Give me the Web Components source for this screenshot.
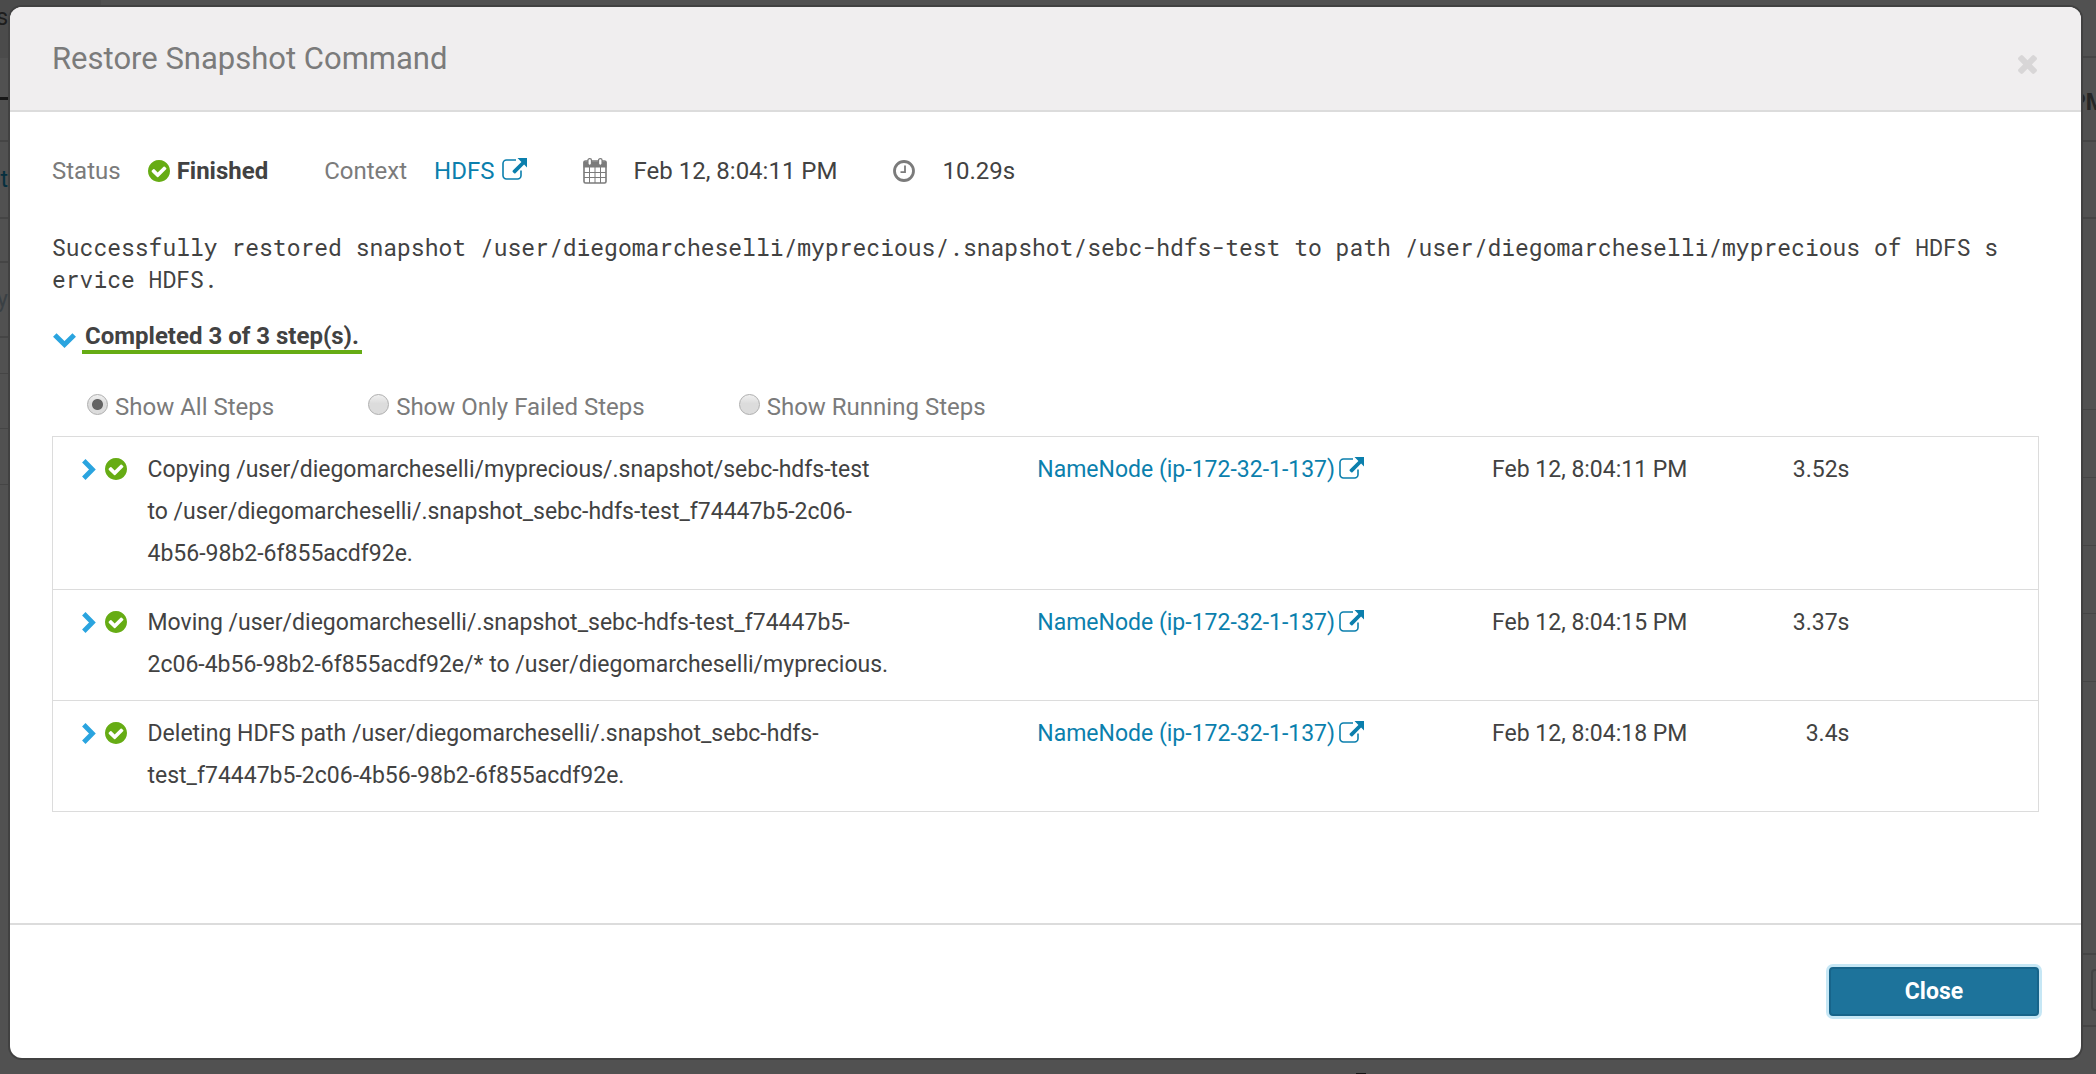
<!DOCTYPE html>
<html lang="en">
<head>
<meta charset="utf-8">
<title>Restore Snapshot Command</title>
<style>
html, body { height: 100%; margin: 0; }
body { font-family: Roboto, "Liberation Sans", sans-serif; color: #424242; background: #515151; }
</style>
</head>
<body>
<app-shell>
  <page-edge slot="left" side="left"></page-edge>
  <page-edge slot="right" side="right"></page-edge>
  <command-dialog heading="Restore Snapshot Command">
    <command-summary></command-summary>
    <command-message>Successfully restored snapshot /user/diegomarcheselli/myprecious/.snapshot/sebc-hdfs-test to path /user/diegomarcheselli/myprecious of HDFS service HDFS.</command-message>
    <steps-heading>Completed 3 of 3 step(s).</steps-heading>
    <step-filter></step-filter>
    <step-table></step-table>
  </command-dialog>
</app-shell>
<script>
class Base extends HTMLElement {
  connectedCallback() {
    if (this.shadowRoot) return;
    this.attachShadow({ mode: 'open' }).innerHTML = this.view();
  }
}

const ICONS = {
  check: ['128 128 1536 1536', 22, 22, '<path fill="currentColor" d="M1412 734q0-28-18-46l-91-90q-19-19-45-19t-45 19l-408 407-226-226q-19-19-45-19t-45 19l-91 90q-18 18-18 46 0 27 18 45l362 362q19 19 45 19 27 0 46-19l543-543q18-18 18-45zm252 162q0 209-103 385.5t-279.5 279.5-385.5 103-385.5-103-279.5-279.5-103-385.5 103-385.5 279.5-279.5 385.5-103 385.5 103 279.5 279.5 103 385.5z"/>'],
  times: ['302 366 1188 1188', 19, 19, '<path fill="currentColor" d="M1490 1322q0 40-28 68l-136 136q-28 28-68 28t-68-28l-294-294-294 294q-28 28-68 28t-68-28l-136-136q-28-28-28-68t28-68l294-294-294-294q-28-28-28-68t28-68l136-136q28-28 68-28t68 28l294 294 294-294q28-28 68-28t68 28l136 136q28 28 28 68t-28 68l-294 294 294 294q28 28 28 68z"/>'],
  external: ['0 0 25 22', 25, 22, '<path fill="none" stroke="currentColor" stroke-width="1.6" d="M14 2H4.5A3.5 3.5 0 0 0 1 5.500v12A3.500 3.500 0 0 0 4.500 21h11a3.500 3.500 0 0 0 3.500-3.500V12.500"/><path fill="currentColor" d="M15.500 0H25v9.500l-2.900-2.900-8.600 8.600a1 1 0 0 1-1.400 0l-1.300-1.300a1 1 0 0 1 0-1.400l8.600-8.600z"/>'],
  calendar: ['0 0 24 26', 24, 26, '<rect x="1" y="3" width="22" height="22" rx="1.500" fill="none" stroke="currentColor" stroke-width="1.600"/><path fill="currentColor" d="M.500 3.500h23v6H.500z"/><path fill="none" stroke="currentColor" stroke-width="1" d="M6.500 9v16M12 9v16M17.500 9v16M1 14.500h22M1 19.500h22"/><rect x="4.900" y=".700" width="3.600" height="6.600" rx="1.700" fill="#fff" stroke="currentColor" stroke-width="1.300"/><rect x="15.500" y=".700" width="3.600" height="6.600" rx="1.700" fill="#fff" stroke="currentColor" stroke-width="1.300"/>'],
  clock: ['0 0 22 22', 22, 22, '<circle cx="11" cy="11" r="9.500" fill="none" stroke="currentColor" stroke-width="2.800"/><path fill="none" stroke="currentColor" stroke-width="1.800" d="M12 5.500v6.600H7.500"/>'],
  down: ['0 0 23 15', 23, 15, '<path fill="none" stroke="currentColor" stroke-width="5" d="M1.800 2l9.700 9.500L21.200 2"/>'],
  right: ['0 0 14 21', 14, 21, '<path fill="none" stroke="currentColor" stroke-width="4.800" d="M1.800 1.800l8.600 8.700-8.600 8.700"/>']
};
customElements.define('ui-icon', class extends Base {
  view() {
    const [box, w, h, body] = ICONS[this.getAttribute('name')];
    return `<style>:host{display:inline-flex;flex:none}svg{display:block}</style>
      <svg width="${w}" height="${h}" viewBox="${box}" aria-hidden="true">${body}</svg>`;
  }
});

customElements.define('app-shell', class extends Base {
  view() {
    return `<style>
      :host { display: grid; grid-template-columns: 10px minmax(0, 1fr) 15px; min-height: 100vh;
        background: linear-gradient(#141414, #141414) 65% 100% / 10px 1px no-repeat,
          linear-gradient(#4b4b4b, #4b4b4b) 0 0 / 101px 58px no-repeat, #515151; }
      ::slotted(command-dialog) { margin: 7px 0 16px; }
    </style><slot name="left"></slot><slot></slot><slot name="right"></slot>`;
  }
});

/* The slivers of the dimmed page on either side of the dialog */
const EDGES = {
  left: [[58, 's', 'ink plain'], [42, '', 'tab'], [42, '', 'thick'], [77, 't', 'teal thick'], [44, '', 'thick'],
    [75, 'y', 'faint thick'], [36, '', ''], [55, '', ''], [56, '', '']],
  right: [[58, '', 'thick'], [84, 'PM', 'bold thick'], [77, '', 'thick'], [191, '', ''], [68, '', ''],
    [68, '', ''], [68, '', ''], [68, '', ''], [273, '', 'thick'], [72, '<i></i>', 'box thick']]
};
customElements.define('page-edge', class extends Base {
  view() {
    const cells = EDGES[this.getAttribute('side')]
      .map(([h, t, c]) => `<div class="${c}" style="height:${h}px">${t}</div>`).join('');
    return `<style>
      :host { display: flex; flex-direction: column; overflow: hidden; font-size: 23px; }
      :host([side=left]) div { justify-content: flex-end; padding-right: 2px; }
      div { box-sizing: border-box; flex: none; display: flex; align-items: center; justify-content: center;
        border-bottom: 1px solid #454545; }
      .thick { border-bottom-width: 2px; }
      .tab { border-bottom: 3px solid #171717; }
      .plain { border-bottom: 0; align-items: flex-start; line-height: 36px; }
      .ink { color: #1d1d1d; } .teal { color: #062f3e; } .faint { color: #3a4044; }
      .bold { font-weight: 700; color: #262626; padding-top: 6px; }
      .box { justify-content: flex-start; padding-left: 10px; }
      i { box-sizing: border-box; flex: none; width: 40px; height: 42px; border: 2px solid #424242; border-radius: 4px; }
    </style>${cells}`;
  }
});

customElements.define('command-dialog', class extends Base {
  view() {
    return `<style>
      :host { display: flex; flex-direction: column; position: relative; background: #fff; border-radius: 12px;
        box-shadow: 0 0 0 2px #414141; }
      header { display: flex; align-items: center; justify-content: space-between; padding: 31px 42px 30px;
        background: #f0eeef; border-bottom: 2px solid #dcdcdc; border-radius: 12px 12px 0 0; }
      h1 { margin: 0; font-size: 31px; line-height: 42px; font-weight: 400; color: #7b7b7b; }
      .x { display: flex; padding: 10px 2px 0; border: 0; background: none; color: #d8d6d7; }
      main { flex: 1; padding: 38px 42px; }
      footer { display: flex; justify-content: flex-end; padding: 42px; border-top: 2px solid #dcdcdc; }
      .close { min-width: 210px; height: 49px; padding: 0 24px; font: 700 23px Roboto, sans-serif; color: #fff;
        background: #1d739b; border: 2px solid #17648a; border-radius: 4px; box-shadow: 0 0 0 3px #c6e7f5; }
    </style>
    <header><h1>${this.getAttribute('heading')}</h1>
      <button class="x" type="button" aria-label="Dismiss"><ui-icon name="times"></ui-icon></button></header>
    <main><slot></slot></main>
    <footer><button class="close" type="button">Close</button></footer>`;
  }
});

customElements.define('command-summary', class extends Base {
  view() {
    return `<style>
      :host { display: flex; flex-wrap: wrap; gap: 0 56px; font-size: 24px; line-height: 42px; }
      div { display: flex; align-items: center; gap: 27px; }
      .label, .muted { color: #7b7b7b; }
      b, a { display: flex; align-items: center; gap: 7px; }
      b ui-icon { color: #66ac14; }
      a { color: #0b7fad; text-decoration: none; }
      a ui-icon { margin-bottom: 4px; }
    </style>
    <div><span class="label">Status</span><b><ui-icon name="check"></ui-icon>Finished</b></div>
    <div><span class="label">Context</span><a href="#hdfs">HDFS<ui-icon name="external"></ui-icon></a></div>
    <div><ui-icon class="muted" name="calendar"></ui-icon><span>Feb 12, 8:04:11 PM</span></div>
    <div><ui-icon class="muted" name="clock"></ui-icon><span>10.29s</span></div>`;
  }
});

customElements.define('command-message', class extends Base {
  view() {
    return `<style>
      :host { display: block; margin-top: 39px; padding-right: 32px; font: 23px/32px "Roboto Mono", monospace;
        word-break: break-all; }
    </style><slot></slot>`;
  }
});

customElements.define('steps-heading', class extends Base {
  view() {
    return `<style>
      :host { display: block; margin-top: 27px; }
      button { display: flex; align-items: center; gap: 6px; padding: 0 0 0 1px; border: 0; background: none;
        font: 700 24px/28px Roboto, sans-serif; color: #424242; }
      ui-icon { color: #2aa4df; margin-top: 4px; }
      span { padding: 0 3px; border-bottom: 4px solid #66ac14; }
    </style><button type="button" aria-expanded="true"><ui-icon name="down"></ui-icon><span><slot></slot></span></button>`;
  }
});

customElements.define('step-filter', class extends Base {
  view() {
    const items = ['Show All Steps', 'Show Only Failed Steps', 'Show Running Steps'].map((t, i) =>
      `<label><input type="radio" name="steps"${i ? '' : ' checked'}>${t}</label>`).join('');
    return `<style>
      :host { display: flex; flex-wrap: wrap; gap: 0 94px; margin: 32px 0 8px; padding-left: 35px;
        font-size: 24px; line-height: 42px; color: #7b7b7b; }
      label { display: flex; align-items: center; gap: 7px; }
      input { appearance: none; width: 21px; height: 21px; margin: 0 0 5px; border: 1px solid #aeaeae;
        border-radius: 50%; background: linear-gradient(#f0f0f0, #dcdcdc 45%, #dcdcdc); }
      input:checked { background: radial-gradient(circle, #636363 5px, transparent 6px), linear-gradient(#f0f0f0, #dcdcdc 45%, #dcdcdc); }
    </style>${items}`;
  }
});

const STEPS = [
  ['Copying /user/diegomarcheselli/myprecious/.snapshot/sebc-hdfs-test to /user/diegomarcheselli/.snapshot_sebc-hdfs-test_f74447b5-2c06-4b56-98b2-6f855acdf92e.', 'Feb 12, 8:04:11 PM', '3.52s'],
  ['Moving /user/diegomarcheselli/.snapshot_sebc-hdfs-test_f74447b5-2c06-4b56-98b2-6f855acdf92e/* to /user/diegomarcheselli/myprecious.', 'Feb 12, 8:04:15 PM', '3.37s'],
  ['Deleting HDFS path /user/diegomarcheselli/.snapshot_sebc-hdfs-test_f74447b5-2c06-4b56-98b2-6f855acdf92e.', 'Feb 12, 8:04:18 PM', '3.4s']
];
customElements.define('step-table', class extends Base {
  view() {
    const rows = STEPS.map(([text, time, took]) => `<tr>
      <td class="state"><div><button type="button" aria-label="Expand step"><ui-icon name="right"></ui-icon></button><ui-icon class="ok" name="check"></ui-icon></div></td>
      <td><p>${text}</p></td>
      <td><a href="#namenode">NameNode (ip-172-32-1-137)<ui-icon name="external"></ui-icon></a></td>
      <td>${time}</td><td class="took">${took}</td><td></td></tr>`).join('');
    return `<style>
      :host { display: block; font-size: 23px; line-height: 42px; }
      table { width: 100%; table-layout: fixed; border-collapse: collapse; border: 1px solid #dcdcdc; }
      .c1 { width: 95px; } .c2 { width: 44.8%; } .c3 { width: 22.9%; } .c4 { width: 12%; } .c5 { width: 6%; }
      td { padding: 12px 0 14px; vertical-align: top; border-bottom: 1px solid #dcdcdc; }
      p { margin: 0; max-width: 744px; }
      .state div { display: flex; align-items: center; gap: 9px; height: 42px; padding: 0 0 2px 29px; box-sizing: border-box; }
      button { display: flex; padding: 0; border: 0; background: none; color: #2aa4df; }
      .ok { color: #66ac14; }
      a { display: inline-flex; align-items: center; gap: 4px; color: #0b7fad; text-decoration: none; }
      a ui-icon { margin-bottom: 4px; }
      .took { text-align: right; }
    </style>
    <table><colgroup><col class="c1"><col class="c2"><col class="c3"><col class="c4"><col class="c5"><col></colgroup>
      <tbody>${rows}</tbody></table>`;
  }
});
</script>
</body>
</html>
